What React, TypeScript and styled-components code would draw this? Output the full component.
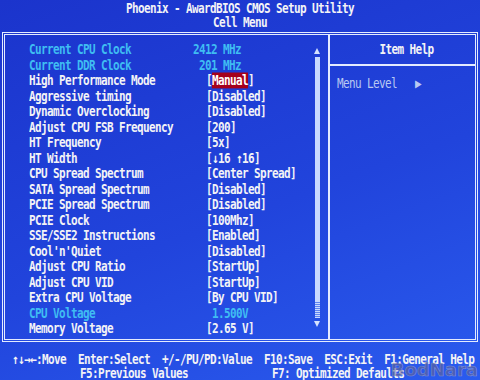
import React from "react";
import styled, { createGlobalStyle, css } from "styled-components";

const GlobalStyle = createGlobalStyle`
  html, body { margin: 0; padding: 0; }
  body {
    width: 480px;
    height: 380px;
    overflow: hidden;
    background: linear-gradient(160deg, #1b34cc 0%, #2144dc 55%, #2a5bee 100%);
    font-family: "DejaVu Sans Mono", "Liberation Mono", monospace;
    font-weight: bold;
    font-size: 11px;
    letter-spacing: -0.62px;
    color: #f3f3f6;
  }
`;

// BIOS glyphs are taller than a regular monospace face
const tall = css`
  transform: scaleY(1.22);
`;

const Tall = styled.span`
  display: inline-block;
  line-height: 11px;
  ${tall};
`;

const Screen = styled.div`
  position: relative;
  width: 480px;
  height: 380px;
  display: flex;
  flex-direction: column;
`;

const Header = styled.div`
  padding-top: 1px;
  text-align: center;
`;

const HeaderLine = styled.div`
  height: 14px;
  display: flex;
  align-items: center;
  justify-content: center;
  white-space: pre;
`;

const Frame = styled.div`
  box-sizing: border-box;
  margin: 3px 2px 0 2px;
  height: 311px;
  border: 3px double #e4ebff;
  display: grid;
  grid-template-columns: 323px 2px 1fr;
`;

const Divider = styled.div`
  background: #e4ebff;
`;

const LeftPanel = styled.div`
  display: flex;
`;

const List = styled.div`
  width: 308px;
  padding-top: 7px;
`;

const Row = styled.div<{ $dim?: boolean }>`
  display: grid;
  grid-template-columns: 177px 1fr;
  padding-left: 24px;
  height: 15.5px;
  line-height: 15.5px;
  white-space: pre;
  color: ${({ $dim }) => ($dim ? "#3fbdf2" : "#f3f3f6")};
  ${tall};
`;

const Value = styled.span<{ $shift?: number }>`
  margin-left: ${({ $shift }) => $shift ?? 0}px;
`;

const Selected = styled.span`
  background: #a5001c;
  color: #ffffff;
`;

const ScrollBar = styled.div`
  width: 8px;
  margin-top: 13px;
  display: flex;
  flex-direction: column;
  align-items: center;
  gap: 3px;
`;

const Track = styled.div`
  width: 5px;
  height: 261px;
  display: flex;
  flex-direction: column;
`;

const Thumb = styled.div`
  flex: 1;
  background: #c9d9ff;
`;

const TrackRest = styled.div`
  height: 16px;
  background: repeating-linear-gradient(0deg, #c9d9ff 0 1px, #5f84f0 1px 2px);
`;

const RightPanel = styled.div`
  display: flex;
  flex-direction: column;
`;

const HelpTitle = styled.div`
  height: 29px;
  border-bottom: 2px solid #e4ebff;
  display: flex;
  align-items: center;
  justify-content: center;
  padding-left: 8px;
`;

const HelpText = styled.div`
  padding: 11px 0 0 7px;
  color: #b9c9f2;
  font-weight: normal;
  white-space: pre;
`;

const Footer = styled.div`
  margin-top: 10px;
`;

const FooterLine = styled.div<{ $indent: number }>`
  padding-left: ${({ $indent }) => $indent}px;
  height: 14px;
  display: flex;
  align-items: center;
  white-space: pre;
`;

const Watermark = styled.div`
  position: absolute;
  right: 2px;
  bottom: 1px;
  font-family: "DejaVu Sans", sans-serif;
  font-size: 18px;
  line-height: 18px;
  font-weight: bold;
  letter-spacing: 0;
  color: rgba(100, 100, 145, 0.6);
  -webkit-text-stroke: 0.6px rgba(200, 200, 225, 0.45);
`;

const Arrow: React.FC<{ up?: boolean }> = ({ up }) => (
  <svg width="6" height="6" viewBox="0 0 6 6">
    <polygon points={up ? "3,0 6,6 0,6" : "0,0 6,0 3,6"} fill="#d5e2ff" />
  </svg>
);

interface Item {
  label: string;
  value: React.ReactNode;
  dim?: boolean;
  shift?: number;
}

const items: Item[] = [
  { label: "Current CPU Clock", value: "2412 MHz", dim: true, shift: -13 },
  { label: "Current DDR Clock", value: "201 MHz", dim: true, shift: -7 },
  { label: "High Performance Mode", value: <>[<Selected>Manual</Selected>]</> },
  { label: "Aggressive timing", value: "[Disabled]" },
  { label: "Dynamic Overclocking", value: "[Disabled]" },
  { label: "Adjust CPU FSB Frequency", value: "[200]" },
  { label: "HT Frequency", value: "[5x]" },
  { label: "HT Width", value: "[↓16 ↑16]" },
  { label: "CPU Spread Spectrum", value: "[Center Spread]" },
  { label: "SATA Spread Spectrum", value: "[Disabled]" },
  { label: "PCIE Spread Spectrum", value: "[Disabled]" },
  { label: "PCIE Clock", value: "[100Mhz]" },
  { label: "SSE/SSE2 Instructions", value: "[Enabled]" },
  { label: "Cool'n'Quiet", value: "[Disabled]" },
  { label: "Adjust CPU Ratio", value: "[StartUp]" },
  { label: "Adjust CPU VID", value: "[StartUp]" },
  { label: "Extra CPU Voltage", value: "[By CPU VID]" },
  { label: "CPU Voltage", value: "1.500V", dim: true, shift: 6 },
  { label: "Memory Voltage", value: "[2.65 V]" },
];

const App: React.FC = () => (
  <Screen>
    <GlobalStyle />
    <Header>
      <HeaderLine><Tall>Phoenix - AwardBIOS CMOS Setup Utility</Tall></HeaderLine>
      <HeaderLine><Tall>Cell Menu</Tall></HeaderLine>
    </Header>
    <Frame>
      <LeftPanel>
        <List>
          {items.map((item) => (
            <Row key={item.label} $dim={item.dim}>
              <span>{item.label}</span>
              <Value $shift={item.shift}>{item.value}</Value>
            </Row>
          ))}
        </List>
        <ScrollBar>
          <Arrow up />
          <Track>
            <Thumb />
            <TrackRest />
          </Track>
          <Arrow />
        </ScrollBar>
      </LeftPanel>
      <Divider />
      <RightPanel>
        <HelpTitle><Tall>Item Help</Tall></HelpTitle>
        <HelpText><Tall>Menu Level   ▶</Tall></HelpText>
      </RightPanel>
    </Frame>
    <Footer>
      <FooterLine $indent={12}><Tall>↑↓→←:Move  Enter:Select  +/-/PU/PD:Value  F10:Save  ESC:Exit  F1:General Help</Tall></FooterLine>
      <FooterLine $indent={80}><Tall>F5:Previous Values              F7: Optimized Defaults</Tall></FooterLine>
    </Footer>
    <Watermark>BodNara</Watermark>
  </Screen>
);

export default App;
